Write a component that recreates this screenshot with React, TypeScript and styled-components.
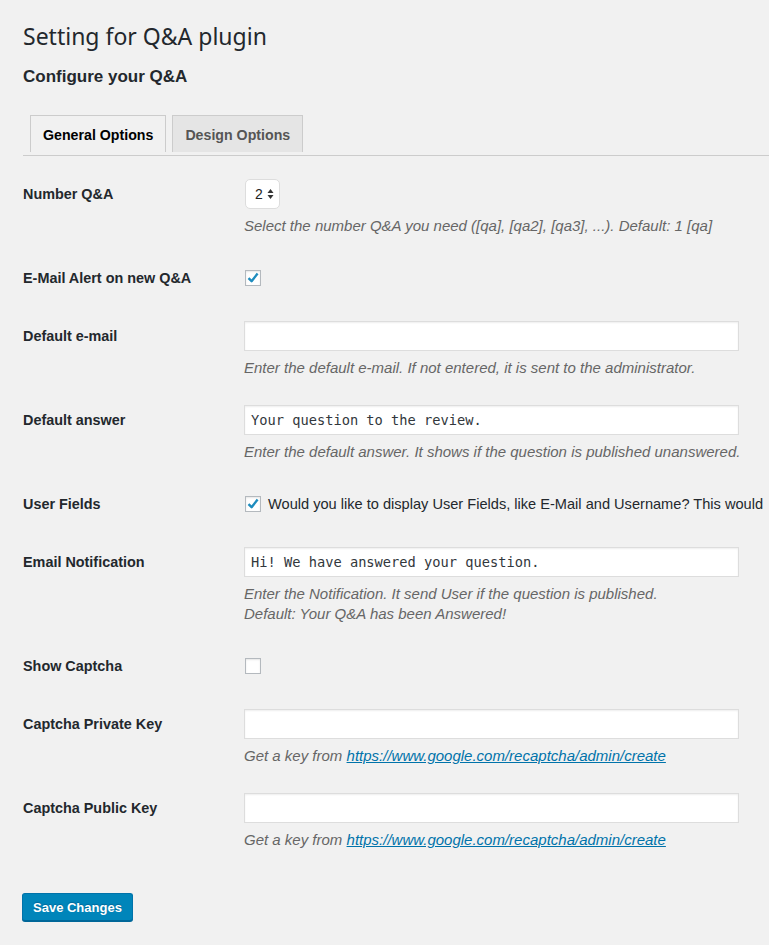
import React from 'react';
import styled, { createGlobalStyle } from 'styled-components';

const GlobalStyle = createGlobalStyle`
    html, body {
        margin: 0;
        background: #f1f1f1;
        overflow-x: hidden;
    }
    body {
        font-family: "Liberation Sans", Arial, sans-serif;
        color: #23282d;
        font-size: 14px;
    }
`;

const Wrap = styled.div`
    padding: 22px 0 24px 23px;
`;

const Title = styled.h1`
    margin: 0;
    font-family: "Noto Sans", "Liberation Sans", sans-serif;
    font-size: 23px;
    line-height: 29px;
    font-weight: 400;
`;

const SubTitle = styled.h2`
    margin: 15px 0 0;
    font-size: 17px;
    line-height: 22px;
    font-weight: 700;
`;

const TabBar = styled.div`
    display: flex;
    margin-top: 27px;
    padding: 0 0 3px 7px;
    border-bottom: 1px solid #ccc;
`;

const Tab = styled.div<{ $active?: boolean }>`
    height: 36px;
    line-height: 38px;
    padding: 0 12px;
    margin-right: 6px;
    border: 1px solid #ccc;
    border-bottom: none;
    background: ${(p) => (p.$active ? '#f1f1f1' : '#e5e5e5')};
    color: ${(p) => (p.$active ? '#000' : '#555')};
    font-size: 14.2px;
    font-weight: 700;
`;

const Form = styled.div`
    margin-top: 9px;
`;

const Row = styled.div`
    display: flex;
    align-items: flex-start;
`;

const Label = styled.div`
    width: 221px;
    flex: none;
    padding-top: 20px;
    line-height: 18px;
    font-size: 14.4px;
    font-weight: 700;
`;

const Field = styled.div`
    padding: 14px 0 13px;
    min-width: 0;
`;

const TextInput = styled.div`
    box-sizing: border-box;
    width: 495px;
    height: 30px;
    background: #fff;
    border: 1px solid #ddd;
    box-shadow: inset 0 1px 2px rgba(0, 0, 0, 0.07);
    padding: 0 6px;
    line-height: 28px;
    font-family: "DejaVu Sans Mono", "Liberation Mono", monospace;
    font-size: 13.7px;
    color: #32373c;
    white-space: nowrap;
`;

const Description = styled.div`
    margin-top: 7px;
    line-height: 20px;
    font-size: 15px;
    font-style: italic;
    color: #666;
`;

const Link = styled.a`
    color: #0073aa;
    text-decoration: underline;
`;

const CheckLine = styled.div`
    height: 30px;
    margin-bottom: 1px;
    display: flex;
    align-items: center;
    white-space: nowrap;
    font-size: 14.6px;
`;

const Box = styled.span`
    box-sizing: border-box;
    width: 16px;
    height: 16px;
    flex: none;
    margin-left: 1px;
    margin-right: 7px;
    background: #fff;
    border: 1px solid #b4b9be;
    box-shadow: inset 0 1px 2px rgba(0, 0, 0, 0.1);
    display: flex;
    align-items: center;
    justify-content: center;
`;

const NumberSelect = styled.div`
    box-sizing: border-box;
    width: 35px;
    height: 30px;
    margin-left: 1px;
    background: #fff;
    border: 1px solid #ddd;
    border-radius: 5px;
    display: flex;
    align-items: center;
    padding-left: 9px;
    gap: 4px;
    font-size: 14px;
    color: #222;
`;

const Submit = styled.button`
    margin: 30px 0 0 -1px;
    height: 28px;
    padding: 0 10px;
    background: #0085ba;
    border: 1px solid #0073aa;
    border-bottom-color: #006799;
    box-shadow: 0 1px 0 #006799;
    border-radius: 3px;
    color: #fff;
    font-family: "Liberation Sans", Arial, sans-serif;
    font-size: 13px;
    font-weight: 700;
    text-shadow: 0 -1px 1px #006799;
    cursor: pointer;
`;

function Checkbox({ checked }: { checked?: boolean }) {
    return (
        <Box>
            {checked && (
                <svg width="14" height="14" viewBox="0 0 14 14">
                    <path
                        d="M2.5 7.2 L5.6 10.2 L11.6 2.6"
                        fill="none"
                        stroke="#1e8cbe"
                        strokeWidth="2.4"
                        strokeLinejoin="round"
                    />
                </svg>
            )}
        </Box>
    );
}

const recaptcha = 'https://www.google.com/recaptcha/admin/create';

export default function App() {
    return (
        <>
            <GlobalStyle />
            <Wrap>
                <Title>Setting for Q&amp;A plugin</Title>
                <SubTitle>Configure your Q&amp;A</SubTitle>
                <TabBar>
                    <Tab $active>General Options</Tab>
                    <Tab>Design Options</Tab>
                </TabBar>
                <Form>
                    <Row>
                        <Label>Number Q&amp;A</Label>
                        <Field>
                            <NumberSelect>
                                2
                                <svg width="7" height="12" viewBox="0 0 7 12">
                                    <path d="M3.5 1 L6.5 5 L0.5 5 Z" fill="#333" />
                                    <path d="M3.5 11 L6.5 7 L0.5 7 Z" fill="#333" />
                                </svg>
                            </NumberSelect>
                            <Description>
                                Select the number Q&amp;A you need ([qa], [qa2], [qa3], ...). Default: 1 [qa]
                            </Description>
                        </Field>
                    </Row>
                    <Row>
                        <Label>E-Mail Alert on new Q&amp;A</Label>
                        <Field>
                            <CheckLine>
                                <Checkbox checked />
                            </CheckLine>
                        </Field>
                    </Row>
                    <Row>
                        <Label>Default e-mail</Label>
                        <Field>
                            <TextInput />
                            <Description>
                                Enter the default e-mail. If not entered, it is sent to the administrator.
                            </Description>
                        </Field>
                    </Row>
                    <Row>
                        <Label>Default answer</Label>
                        <Field>
                            <TextInput>Your question to the review.</TextInput>
                            <Description>
                                Enter the default answer. It shows if the question is published unanswered.
                            </Description>
                        </Field>
                    </Row>
                    <Row>
                        <Label>User Fields</Label>
                        <Field>
                            <CheckLine>
                                <Checkbox checked />
                                Would you like to display User Fields, like E-Mail and Username? This would
                            </CheckLine>
                        </Field>
                    </Row>
                    <Row>
                        <Label>Email Notification</Label>
                        <Field>
                            <TextInput>Hi! We have answered your question.</TextInput>
                            <Description>
                                Enter the Notification. It send User if the question is published.
                                <br />
                                Default: Your Q&amp;A has been Answered!
                            </Description>
                        </Field>
                    </Row>
                    <Row>
                        <Label>Show Captcha</Label>
                        <Field>
                            <CheckLine>
                                <Checkbox />
                            </CheckLine>
                        </Field>
                    </Row>
                    <Row>
                        <Label>Captcha Private Key</Label>
                        <Field>
                            <TextInput />
                            <Description>
                                Get a key from <Link href="#">{recaptcha}</Link>
                            </Description>
                        </Field>
                    </Row>
                    <Row>
                        <Label>Captcha Public Key</Label>
                        <Field>
                            <TextInput />
                            <Description>
                                Get a key from <Link href="#">{recaptcha}</Link>
                            </Description>
                        </Field>
                    </Row>
                </Form>
                <Submit>Save Changes</Submit>
            </Wrap>
        </>
    );
}
